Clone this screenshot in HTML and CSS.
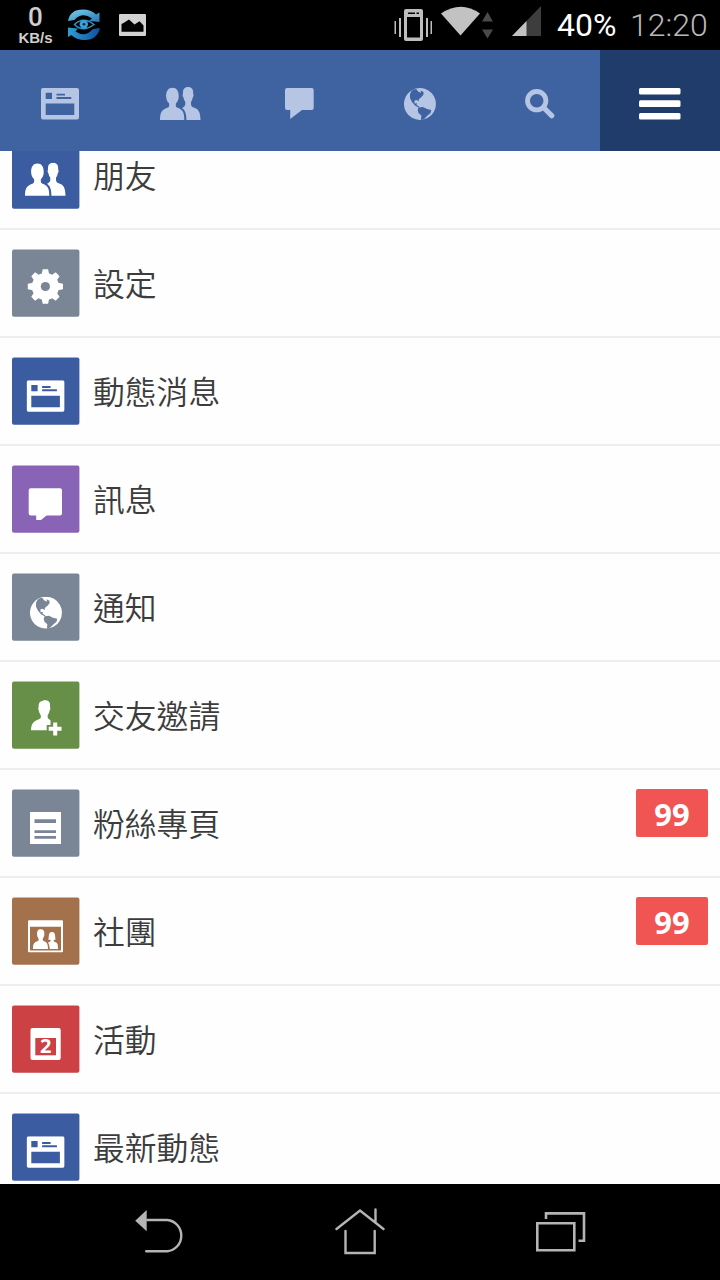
FILE: index.html
```html
<!DOCTYPE html>
<html lang="zh-Hant">
<head>
<meta charset="utf-8">
<title>選單</title>
<link rel="stylesheet" href="styles.css">
</head>
<body>
<svg class="defs" aria-hidden="true">
  <symbol id="people" viewBox="0 0 41 34">
    <path d="M0 33C0 25 2 22.800 8 20.600C9.300 20 9.400 18.500 9 16.300C7.500 15 6.500 13 6.200 10.500C5.600 4 8.500.8 12.500.8S19.200 4 18.700 10.500C18.400 13 17.500 15 16 16.300C15.600 18.500 15.700 20 17 20.600C22.700 22.800 24.300 25 24.300 33Z"/>
    <path d="M26.400 33C26.400 27 25.400 23.500 22 21C25.300 19.500 25.500 18 25.200 14.800C24.200 13.500 23.700 12 23.500 10.600C22.500 10 22.300 7.500 23 7C22.700 2 24.500 0 28.100 0S33.500 2 33.200 7C33.900 7.500 33.700 10 32.700 10.600C32.500 12 32 13.500 31.100 14.800C30.800 18 31 19.400 33 20.200C38.700 22 40.300 24.500 40.500 33Z"/>
  </symbol>
  <symbol id="news" viewBox="0 0 38 32">
    <path fill-rule="evenodd" d="M2 0H36Q38 0 38 2V29.500Q38 31.500 36 31.500H2Q0 31.500 0 29.500V2Q0 0 2 0ZM4.700 4.700V11H11V4.700ZM15.500 5.800V7.600H24V5.800ZM15.500 9V10.900H30.300V9ZM4.700 15.500V27H33.300V15.500Z"/>
  </symbol>
  <symbol id="globe" viewBox="0 0 32 32">
    <path fill-rule="evenodd" d="M16 0A16 16 0 1 1 15.900 0ZM7.700 2.700L6 6V10L8 14L11 17.500L14.500 19.500L15.500 18.700L12.500 17L13 15.300L10.500 15.500V12.500L13 12L14.500 13.500L15 11L17.500 9L19.500 6.500V4L16.500 2.500L17 5L14 3.500L12.500 1.200L10.500 1.300ZM14.500 19.500L19 19L23 21L27.300 22L26.500 25L23 28L20 31L17 31.800L17.300 27.500L14.500 25L13.700 22Z"/>
  </symbol>
</svg>

<header class="status">
  <div class="speed"><span class="speed-num">0</span><b class="speed-unit">KB/s</b></div>
  <svg class="eye" width="34" height="34" viewBox="0 0 34 34">
    <defs>
      <linearGradient id="g1" x1="0" y1="0" x2="1" y2="1"><stop offset="0" stop-color="#7fd0e8"/><stop offset="1" stop-color="#2279b8"/></linearGradient>
      <linearGradient id="g2" x1="0" y1="0" x2="1" y2="0"><stop offset="0" stop-color="#2d9fd2"/><stop offset="1" stop-color="#0f4fa0"/></linearGradient>
    </defs>
    <path fill="url(#g1)" d="M1 13Q3 1.500 16 1.500Q24 1.500 29 6.500L32.500 4.500V14L22 13L25 10.500Q15 3.500 7.500 12Z"/>
    <path fill="url(#g2)" d="M33 20Q30 32 18 32Q9 32 4.500 27L1 29V19.500L11 20.500L8.500 23.500Q18 30 26 21Z"/>
    <path fill="none" stroke="#2f91c2" stroke-width="1.500" d="M7.500 16.500Q16 8 27 16.500Q16 25 7.500 16.500Z"/>
    <circle cx="16.800" cy="16.300" r="4.200" fill="#3aa0d8"/><circle cx="17" cy="16.300" r="1.300" fill="#06283f"/>
  </svg>
  <svg class="photo" width="28" height="23" viewBox="0 0 28 23">
    <path fill="#d2d2d2" fill-rule="evenodd" d="M1 0H26Q27 0 27 1V21Q27 22 26 22H1Q0 22 0 21V1Q0 0 1 0ZM2.500 10V17.800H24.500V11.500L20.500 7.300L15.500 10.500L10 5.500L4.500 9Z"/>
  </svg>
  <svg class="vibrate" width="38" height="34" viewBox="0 0 38 34" fill="#bdbdbd">
    <path fill-rule="evenodd" d="M12 0H27Q29 0 29 2V30Q29 32 27 32H12Q10 32 10 30V2Q10 0 12 0ZM14 3.500V5H21V3.500ZM22.500 3.500V5H25V3.500ZM13 8V28.500H26V8Z"/>
    <path d="M.5 12H2V25H.5ZM5 9H7V28H5ZM32 9H34V28H32ZM36.500 12H38V25H36.500Z"/>
  </svg>
  <svg class="wifi" width="52" height="34" viewBox="0 0 52 34">
    <path fill="#c2c2c2" d="M0 7.500Q20-6 39 7.500L19.500 29.500Z"/>
    <path fill="#4a4a4a" d="M46.500 6L52 15.500H41ZM41 23.500H52L46.500 32.500Z"/>
  </svg>
  <svg class="signal" width="30" height="30" viewBox="0 0 30 30">
    <path fill="#3d3d3d" d="M0 30L29 0V30Z"/><path fill="#c2c2c2" d="M0 30L14.500 15V30Z"/>
  </svg>
  <span class="battery">40%</span>
  <span class="clock">12:20</span>
</header>

<nav class="tabs">
  <a class="tab"><svg class="t-news"><use href="#news"/></svg></a>
  <a class="tab"><svg class="t-people"><use href="#people"/></svg></a>
  <a class="tab"><svg class="t-chat" viewBox="0 0 29 32"><path d="M2 0H26.700Q28.700 0 28.700 2V20Q28.700 22 26.700 22H17L5.200 31V22H2Q0 22 0 20V2Q0 0 2 0Z"/></svg></a>
  <a class="tab"><svg class="t-globe"><use href="#globe"/></svg></a>
  <a class="tab"><svg class="t-search" viewBox="0 0 30 30"><g fill="none" stroke="#b5c5e3"><circle cx="11.700" cy="11.700" r="9.200" stroke-width="4.800"/><path d="M18.500 18.500L26.700 26.700" stroke-width="5.200" stroke-linecap="round"/></g></svg></a>
  <a class="tab active"><svg class="t-menu" viewBox="0 0 42 32"><rect width="41.500" height="6.500" rx="1.500"/><rect y="12.300" width="41.500" height="6.700" rx="1.500"/><rect y="25" width="41.500" height="6.500" rx="1.500"/></svg></a>
</nav>

<main class="list">
  <div class="row"><svg class="tile blue" viewBox="0 0 68 68"><rect class="bg"/><use href="#people" x="13" y="21.800" width="41" height="34"/></svg><span class="label">朋友</span></div>
  <div class="row"><svg class="tile gray" viewBox="0 0 68 68"><rect class="bg"/><g transform="translate(33.400 37.500)"><circle r="13.600"/><path d="M-2.700-17.300H2.700L4-11H-4ZM-2.700 17.300H2.700L4 11H-4ZM-17.600-2.700V2.700L-11 4V-4ZM17.600-2.700V2.700L11 4V-4Z"/><path transform="rotate(45)" d="M-2.700-17.300H2.700L4-11H-4ZM-2.700 17.300H2.700L4 11H-4ZM-17.300-2.700V2.700L-11 4V-4ZM17.300-2.700V2.700L11 4V-4Z"/><circle class="cut" r="4.600"/></g></svg><span class="label">設定</span></div>
  <div class="row"><svg class="tile blue" viewBox="0 0 68 68"><rect class="bg"/><use href="#news" x="14.600" y="23.300" width="38" height="32"/></svg><span class="label">動態消息</span></div>
  <div class="row"><svg class="tile purple" viewBox="0 0 68 68"><rect class="bg"/><path d="M18.700 23.300H48Q50 23.300 50 25.300V48.500Q50 50.500 48 50.500H34.500L29 55H24.200V50.500H18.700Q16.700 50.500 16.700 48.500V25.300Q16.700 23.300 18.700 23.300Z"/></svg><span class="label">訊息</span></div>
  <div class="row"><svg class="tile gray" viewBox="0 0 68 68"><rect class="bg"/><use href="#globe" x="18" y="23.700" width="32" height="32"/></svg><span class="label">通知</span></div>
  <div class="row"><svg class="tile green" viewBox="0 0 68 68"><rect class="bg"/><path d="M19 49.300C19.300 43 21 40.500 27 38.300C29 37.500 29.300 36 28.600 34C27.300 32 27 31 26.800 29.600C26 28 26.200 26.500 26.700 26C26.300 21.500 28.500 20 31 19.700Q32.500 18.500 33.500 19.300C37.500 19.300 38.500 22.500 38 26C38.600 27 38.400 28.800 37.600 29.600C37.300 31.500 36.700 33 35.700 34C35.300 37 36 38 38.500 39.200V44H34.700V49.300Z"/><path d="M41.200 41.500H45.200V45.800H49.500V49.800H45.200V54.500H41.200V49.800H36.700V45.800H41.200Z"/></svg><span class="label">交友邀請</span></div>
  <div class="row"><svg class="tile gray" viewBox="0 0 68 68"><rect class="bg"/><rect x="18" y="23" width="31" height="32"/><path class="cut" d="M22.500 30.300H44V34H22.500ZM22.500 41.300H44V44H22.500ZM22.500 47H44V49.700H22.500Z"/></svg><span class="label">粉絲專頁</span><b class="badge">99</b></div>
  <div class="row"><svg class="tile brown" viewBox="0 0 68 68"><rect class="bg"/><path fill-rule="evenodd" d="M17 23.300H50Q51 23.300 51 24.300V54.300Q51 55.300 50 55.300H17Q16 55.300 16 54.300V24.300Q16 23.300 17 23.300ZM18 29.700V53.500H49V29.700Z"/><path d="M21 52C21 46.500 22 45.500 26 44C27 43.500 26.800 42.500 26.200 41C25 39.500 24.800 36.500 25.200 35C25.800 32.700 27 32.300 28.700 32.300C31.500 32.300 32.500 34 32.300 36.500C32.500 38.500 32 40 31 41C30.500 43 30.600 43.500 31.600 44C35 45.500 36 46.500 36 52Z"/><path d="M37.700 52Q37.700 47.500 36 45.500C38.500 44.700 39 44 38.600 43C37.500 42.500 36.500 43 36.300 42.500C37.300 40 36 35 40 35C44 35 42.700 40 43.600 42.500C43.300 43.200 42 42.500 41.700 43C41.500 44.300 42 44.600 43.200 45C45.500 46 46 47 46 52Z"/></svg><span class="label">社團</span><b class="badge">99</b></div>
  <div class="row"><svg class="tile red" viewBox="0 0 68 68"><rect class="bg"/><rect x="18.500" y="23" width="30.200" height="32" rx="2"/><rect class="cut" x="23.300" y="33" width="20.700" height="17.300"/><text x="33.800" y="48.300" class="day">2</text></svg><span class="label">活動</span></div>
  <div class="row"><svg class="tile blue" viewBox="0 0 68 68"><rect class="bg"/><use href="#news" x="14.600" y="23.300" width="38" height="32"/></svg><span class="label">最新動態</span></div>
</main>

<footer class="softkeys">
  <svg width="50" height="48" viewBox="-1.200 0 50 48"><path fill="none" stroke="#b4b4b4" stroke-width="2.400" stroke-linecap="round" d="M12 12H32A15.300 15.700 0 0 1 32 43.300H11"/><path fill="#b4b4b4" d="M0 12.700L11.500 2V23.300Z"/></svg>
  <svg width="50" height="48" viewBox="0 0 50 48" fill="none" stroke="#b4b4b4" stroke-width="2.400" stroke-linecap="round"><path d="M1.500 21L25 2.500L48.500 21M40.500 1.500V14M10.500 23V45H39.700V23"/></svg>
  <svg width="50" height="48" viewBox="0 0 50 48" fill="none" stroke="#b4b4b4" stroke-width="2.600"><path d="M1.300 15.300H38.300V42.300H1.300ZM10 11V5.400H48V32.700H42.500"/></svg>
</footer>
</body>
</html>
```
FILE: styles.css
```css
* { box-sizing: border-box; }
body {
  margin: 0;
  width: 720px;
  height: 1280px;
  overflow: hidden;
  display: flex;
  flex-direction: column;
  background: #fff;
  font-family: "Noto Sans", "Noto Sans CJK TC", sans-serif;
}
.defs { display: none; }
svg { display: block; flex: none; }

.status {
  height: 50px;
  flex: none;
  display: flex;
  align-items: flex-start;
  background: #000;
  padding-left: 17px;
  font-family: Roboto, sans-serif;
  font-size: 32px;
  line-height: 50px;
  white-space: nowrap;
}
.speed {
  width: 37px;
  padding-top: 4px;
  display: flex;
  flex-direction: column;
  align-items: center;
  color: #cfcfcf;
}
.speed-num { font-size: 26px; font-weight: 500; line-height: 26px; }
.speed-unit { font-family: "Liberation Sans", sans-serif; font-size: 15px; line-height: 15px; }
.eye { margin: 8px 0 0 13px; }
.photo { margin: 14px 0 0 18px; }
.vibrate { margin: 9px 0 0 247px; }
.wifi { margin: 6px 0 0 9px; }
.signal { margin: 6px 0 0 19px; }
.battery { margin-left: 15px; width: 73px; color: #fff; }
.clock { color: #b8b8b8; font-weight: 300; }

.tabs {
  height: 101px;
  flex: none;
  display: grid;
  grid-template-columns: repeat(6, 120px);
  background: #3f62a1;
}
.tab {
  display: flex;
  align-items: center;
  justify-content: center;
  padding-top: 6px;
  fill: #b5c5e3;
}
.tab.active { background: #203c6b; fill: #fff; }
.t-news { width: 38px; height: 32px; }
.t-people { width: 41px; height: 34px; }
.t-chat { width: 29px; height: 32px; margin-right: 1px; }
.t-globe { width: 32px; height: 32px; }
.t-search { width: 30px; height: 30px; }
.t-menu { width: 42px; height: 32px; }

.list {
  flex: 1;
  min-height: 0;
  overflow: hidden;
  display: flex;
  flex-direction: column;
  justify-content: flex-end;
  background: #fefefe;
}
.row {
  height: 108px;
  flex: none;
  display: flex;
  align-items: flex-start;
  padding: 19px 12px 0;
  border-bottom: 2px solid #eceeef;
}
.row:last-child { height: 90px; border: 0; }
.tile { width: 68px; height: 68px; fill: #fff; }
.bg { x: 0; y: 0.400px; width: 67.400px; height: 67.400px; rx: 2px; fill: var(--tone); }
.cut { fill: var(--tone); }
.blue { --tone: #3b5ca0; }
.gray { --tone: #7a8596; }
.purple { --tone: #8863b6; }
.green { --tone: #678f47; }
.brown { --tone: #a4714d; }
.red { --tone: #cb4144; }
.day { font: bold 20px "Noto Sans", sans-serif; text-anchor: middle; }
.label {
  flex: 1;
  padding-left: 13px;
  font-family: "Noto Sans CJK TC", sans-serif;
  font-weight: 350;
  font-size: 31.800px;
  line-height: 67px;
  color: #3c3c3c;
}
.badge {
  width: 72px;
  height: 48px;
  border-radius: 2px;
  background: #f05553;
  color: #fff;
  font-size: 31px;
  line-height: 50px;
  text-align: center;
}

.softkeys {
  height: 96px;
  flex: none;
  display: flex;
  justify-content: center;
  gap: 151px;
  padding-top: 24px;
  background: #000;
}
```
